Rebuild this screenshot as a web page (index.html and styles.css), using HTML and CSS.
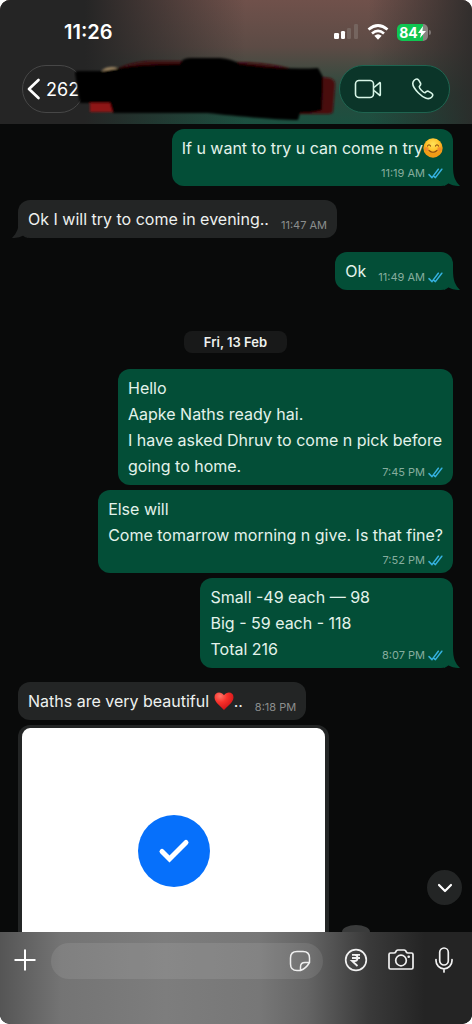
FILE: index.html
```html
<!DOCTYPE html>
<html lang="en">
<head>
<meta charset="utf-8">
<meta name="viewport" content="width=device-width, initial-scale=1">
<title>Chat</title>
<link rel="stylesheet" href="styles.css">
</head>
<body>
<svg class="defs" aria-hidden="true">
  <symbol id="ticks" viewBox="0 0 15 11"><path d="M1 6.6 4 9.6 10.3 1.2M6.2 8.6l1.2 1L13.8 1.2" fill="none" stroke="#35b1df" stroke-width="1.5" stroke-linecap="round" stroke-linejoin="round"/></symbol>
  <symbol id="tail" viewBox="0 0 16 20"><path d="M0 0H9C9 10 11 15 16 20C10 20 7 19 4 17L0 20Z" fill="currentColor"/></symbol>
</svg>
<div class="screen">
  <header class="top">
    <div class="status">
      <time class="clock">11:26</time>
      <div class="indicators">
        <svg width="25" height="16" viewBox="0 0 25 16"><rect y="9" width="5" height="6" rx="1.2" fill="#fff"/><rect x="7" y="7" width="4" height="8" rx="1.2" fill="#fff"/><rect x="13" y="4" width="4" height="11" rx="1.2" fill="#75655f"/><rect x="20" y="0" width="4" height="15" rx="1.2" fill="#75655f"/></svg>
        <svg width="22" height="16" viewBox="0 0 22 16"><g fill="none" stroke="#fff" stroke-width="2.7"><path d="M1.5 5.6Q11-2.6 20.500 5.600"/><path d="M5 9.400Q11 4.200 17 9.400"/></g><path d="M7.300 11.700Q11 8.700 14.700 11.700L11 15.700Z" fill="#fff"/></svg>
        <div class="battery"><span>84</span><svg width="8" height="12" viewBox="0 0 8 12"><path d="M5 0 0 7h3L2 12 8 5H4.500Z" fill="#fff"/></svg></div>
      </div>
    </div>
    <div class="nav">
      <button class="back" aria-label="Back, 262 unread"><svg width="14" height="22" viewBox="0 0 14 22"><path d="M11.500 2 2 11l9.500 9" fill="none" stroke="#fff" stroke-width="2.700" stroke-linecap="round" stroke-linejoin="round"/></svg><span>262</span></button>
      <div class="calls">
        <button aria-label="Video call"><svg width="28" height="20" viewBox="0 0 28 20" fill="none" stroke="#d8f6e8" stroke-width="1.600" stroke-linejoin="round"><rect x="1.500" y="1.500" width="18" height="17" rx="3.500"/><path d="m20 8.500 5.500-4.700q.8-.5.8.5v11.400q0 1-.8.5L20 11.500"/></svg></button>
        <button aria-label="Voice call"><svg width="24" height="24" viewBox="0 0 24 24"><path d="M3 3.500C5 1.500 6.500 1.700 7.700 3.200L9.400 6C10.200 7.400 9.500 8.300 8.500 9.300C7.800 10 8.300 10.900 10.200 13C12.300 15.200 13.700 16.200 14.400 15.400C15.600 14 16.700 13.700 18 14.600L20.500 16.200C22.200 17.400 22.200 18.500 20.600 20.200C17.500 23.500 12 20.500 7.500 16C2.500 11 .2 6.500 3 3.500Z" fill="none" stroke="#d8f6e8" stroke-width="1.600" stroke-linejoin="round"/></svg></button>
      </div>
    </div>
    <svg class="scribble" width="266" height="68" viewBox="0 0 266 68" aria-hidden="true">
      <defs><filter id="soft" x="-10%" y="-20%" width="120%" height="140%"><feGaussianBlur stdDeviation="1.200"/></filter></defs>
      <g filter="url(#soft)"><path d="M28 14Q35 9 44 12L34 20Z" fill="#a99069"/><path d="M40 14Q56 6 74 5H110V16H40ZM158 6Q190 6 215 12V18H158Z" fill="#3d080b"/><path d="M240 20L256 22Q262 24 261 30L259 56Q258 58 252 58H226V50H240Z" fill="#4a0a0e"/><path d="M16 46H39V56H16Z" fill="#8e1216"/><path d="M1 17Q1 15 4 15L28 15L53 11C72 8 90 9 106 8Q108 2 116 2H146Q158 3 166 8Q210 14 244 12L249 21L248 54Q240 57 226 57L224 64C205 64 160 60 133 57L39 57L36 47H6Z" fill="#000"/></g>
    </svg>
  </header>

  <main class="chat">
    <article class="msg out stack"><p>If u want to try u can come n try<svg class="emoji smile" role="img" aria-label="smiling face" viewBox="0 0 20 20"><defs><radialGradient id="face" cx=".5" cy=".3"><stop stop-color="#ffe35a"/><stop offset=".65" stop-color="#ffc32c"/><stop offset="1" stop-color="#f39b16"/></radialGradient></defs><circle cx="10" cy="10" r="9.700" fill="url(#face)"/><path d="M4.500 8Q6 5.500 7.500 8M12.500 8Q14 5.500 15.500 8M6 12.500Q10 16 14 12.500" fill="none" stroke="#8b4a10" stroke-width="1.200" stroke-linecap="round"/><circle cx="3.800" cy="11" r="2" fill="#f47738" opacity=".6"/><circle cx="16.200" cy="11" r="2" fill="#f47738" opacity=".6"/></svg></p><span class="meta">11:19 AM<svg><use href="#ticks"/></svg></span><svg class="tail"><use href="#tail"/></svg></article>
    <article class="msg in"><p>Ok I will try to come in evening..</p><span class="meta">11:47 AM</span><svg class="tail"><use href="#tail"/></svg></article>
    <article class="msg out"><p>Ok</p><span class="meta">11:49 AM<svg><use href="#ticks"/></svg></span><svg class="tail"><use href="#tail"/></svg></article>
    <h2 class="date">Fri, 13 Feb</h2>
    <article class="msg out wrap"><p>Hello<br>Aapke Naths ready hai.<br>I have asked Dhruv to come n pick before going to home.<span class="meta">7:45 PM<svg><use href="#ticks"/></svg></span></p></article>
    <article class="msg out stack follow"><p>Else will<br>Come tomarrow morning n give. Is that fine?</p><span class="meta">7:52 PM<svg><use href="#ticks"/></svg></span></article>
    <article class="msg out follow"><p>Small -49 each — 98<br>Big - 59 each - 118<br>Total 216</p><span class="meta">8:07 PM<svg><use href="#ticks"/></svg></span><svg class="tail"><use href="#tail"/></svg></article>
    <article class="msg in"><p>Naths are very beautiful <svg class="emoji heart" role="img" aria-label="red heart" viewBox="0 0 20 20"><defs><radialGradient id="love" cx=".3" cy=".2" r=".9"><stop stop-color="#ff7468"/><stop offset=".4" stop-color="#f8322b"/><stop offset="1" stop-color="#c70c13"/></radialGradient></defs><path d="M10 19C7 15.500.5 11.500.5 6.200C.5 1 7 0 10 4.300C13 0 19.500 1 19.500 6.200C19.500 11.500 13 15.500 10 19Z" fill="url(#love)"/></svg>..</p><span class="meta">8:18 PM</span></article>
    <figure class="photo"><svg width="72" height="72" viewBox="0 0 72 72" role="img" aria-label="Confirmed"><circle cx="36" cy="36" r="36" fill="#0670fb"/><path d="m24 36.500 7.500 7.500L48 27.500" fill="none" stroke="#fff" stroke-width="5" stroke-linecap="round" stroke-linejoin="miter"/></svg></figure>
    <span class="forward"></span>
    <button class="jump" aria-label="Scroll to latest"><svg width="16" height="10" viewBox="0 0 16 10"><path d="m2 2 6 6 6-6" fill="none" stroke="#fff" stroke-width="2.200" stroke-linecap="round" stroke-linejoin="round"/></svg></button>
  </main>

  <footer class="composer">
    <button class="add" aria-label="Attach"><svg width="22" height="22" viewBox="0 0 22 22"><path d="M11 .5v21M.5 11h21" stroke="#fff" stroke-width="2"/></svg></button>
    <div class="field"><input type="text" aria-label="Message"><button aria-label="Stickers"><svg width="22" height="22" viewBox="0 0 22 22" fill="none" stroke="#eee" stroke-width="1.500" stroke-linejoin="round"><path d="M11.500 20.500H8Q1.500 20.500 1.500 14V8Q1.500 1.500 8 1.500h6Q20.500 1.500 20.500 8v4.500Q17 18.500 11.500 20.500ZM11.500 20.500V17Q11.500 12.500 16 12.500h4.500"/></svg></button></div>
    <div class="actions">
      <button aria-label="Payment"><svg width="24" height="24" viewBox="0 0 24 24" fill="none" stroke="#f1f1f1"><circle cx="12" cy="12" r="10.300" stroke-width="1.700"/><path d="M8 6.800h8M8 10h8M8 6.800h2.500q3 0 3 3.100t-3 3.100H8l5.500 5" stroke-width="1.800"/></svg></button>
      <button aria-label="Camera"><svg width="28" height="24" viewBox="0 0 28 24" fill="none" stroke="#f1f1f1" stroke-width="1.700" stroke-linejoin="round"><path d="M3.500 5H7q1.200 0 1.700-1l.7-1.300Q10 2 11 2h6q1 0 1.600.7L19.300 4q.5 1 1.700 1h3.500Q26 5 26 6.500v13q0 1.500-1.500 1.500h-21Q2 21 2 19.500v-13Q2 5 3.500 5Z"/><circle cx="14" cy="12.500" r="5.300"/><circle cx="21.700" cy="8.700" r="1.300" fill="#f1f1f1" stroke="none"/></svg></button>
      <button aria-label="Voice message"><svg width="20" height="28" viewBox="0 0 20 28" fill="none" stroke="#f1f1f1" stroke-width="1.700" stroke-linecap="round"><rect x="5.700" y="2" width="8.600" height="17" rx="4.300"/><path d="M2 13.500v1.300a8 8 0 0 0 16 0v-1.300M10 23v3"/></svg></button>
    </div>
  </footer>
</div>
</body>
</html>
```

FILE: styles.css
```css
* { box-sizing: border-box; }
body { margin: 0; background: #fff; font-family: Inter, "Liberation Sans", sans-serif; }
p, h2, figure { margin: 0; }
svg { display: block; flex: none; }
button { display: flex; align-items: center; justify-content: center; padding: 0; border: 0; background: none; color: inherit; font: inherit; }
.defs { position: absolute; width: 0; height: 0; }
.screen { display: flex; flex-direction: column; min-height: 100vh; border-radius: 10px; overflow: hidden; background: #090a0a; color: #eef1ef; }

.top { position: relative; flex: none; padding: 18px 22px 11px; background:
  linear-gradient(90deg, #252525 18%, rgba(37,37,37,0) 52%, rgba(42,46,44,0) 78%, rgba(43,42,41,.9) 100%),
  linear-gradient(#70514b, #5c4b45 38%, #284a3d 76%, #1b5040); }
.status { display: flex; justify-content: space-between; align-items: center; height: 28px; padding: 0 22px 0 42px; }
.clock { font-size: 20px; font-weight: 600; color: #fff; }
.indicators { display: flex; align-items: center; gap: 8px; }
.battery { position: relative; display: flex; align-items: center; justify-content: center; width: 31px; height: 17px; border-radius: 5px; background: linear-gradient(90deg, #0fc651 84%, #888380 84%); color: #fff; font-size: 14px; font-weight: 700; }
.battery::after { content: ""; position: absolute; left: 32px; top: 6px; width: 2px; height: 5px; border-radius: 0 2px 2px 0; background: #7b7371; }
.nav { display: flex; justify-content: space-between; margin-top: 19px; }
.back { gap: 5px; height: 48px; padding: 0 4px; border: 1px solid #474747; border-radius: 24px; background: #252525; color: #fff; font-size: 18px; }
.calls { display: flex; align-items: center; justify-content: space-between; width: 111px; height: 48px; padding: 0 14px; border: 1px solid #1f6450; border-radius: 24px; background: #0b3529; }
.scribble { position: absolute; left: 74px; top: 56px; }

.chat { position: relative; flex: 1; display: flex; flex-direction: column; align-items: flex-start; padding: 5px 19px 0 18px; }
.msg { position: relative; display: flex; align-items: flex-end; gap: 12px; padding: 6px 10px; border-radius: 12px; font-size: 16px; line-height: 26px; }
.msg + .msg { margin-top: 14px; }
.msg + .follow { margin-top: 5px; }
.out { align-self: flex-end; background: #034e37; color: #e3f3eb; }
.in { background: #232525; }
.stack { flex-direction: column; gap: 5px; }
.wrap { max-width: 335px; }
.wrap .meta { float: right; margin-top: 12px; }
.meta { display: flex; align-items: center; gap: 3px; height: 14px; font-size: 11px; line-height: 14px; color: #8b8e8d; white-space: nowrap; }
.out .meta { color: #86ad9e; }
.meta svg { width: 15px; height: 11px; }
.tail { position: absolute; right: -7px; bottom: 0; width: 16px; height: 20px; color: #034e37; }
.in .tail { right: auto; left: -6px; color: #232525; transform: scaleX(-1); }
.emoji { display: inline-block; width: 20px; height: 20px; vertical-align: -4px; }
.date { align-self: center; margin: 41px 0 16px; padding: 0 20px; border-radius: 8px; background: #181919; font-size: 13px; font-weight: 600; line-height: 22px; }
.photo { display: flex; flex: 1; justify-content: center; align-items: flex-start; width: 311px; margin-top: 5px; padding-top: 87px; border: solid #232525; border-width: 3px 4px 0; border-radius: 12px 12px 0 0; background: #fff; }
.jump { position: absolute; right: 10px; bottom: 27px; width: 35px; height: 35px; border-radius: 50%; background: #232525; }
.forward { position: absolute; left: 342px; bottom: 0; width: 28px; height: 7px; border-radius: 50% 50% 0 0 / 100% 100% 0 0; background: #3a3b3b; }

.composer { display: flex; align-items: flex-start; flex: none; height: 92px; padding: 11px 18px 0 14px; background: linear-gradient(90deg, #555 0, #747474 13%, #7d7d7d 35%, #777 55%, #656565 65%, #3a3a3a 78%, #242424 90%); }
.add { height: 34px; margin-right: 15px; }
.field { display: flex; flex: 1; min-width: 0; align-items: center; height: 36px; padding: 0 12px; border-radius: 18px; background: rgba(255,255,255,.09); }
.field input { flex: 1; width: 0; min-width: 0; height: 36px; border: 0; outline: 0; background: none; color: #fff; font: inherit; }
.actions { display: flex; flex: none; align-items: center; gap: 19px; height: 34px; margin-left: 21px; }
```
